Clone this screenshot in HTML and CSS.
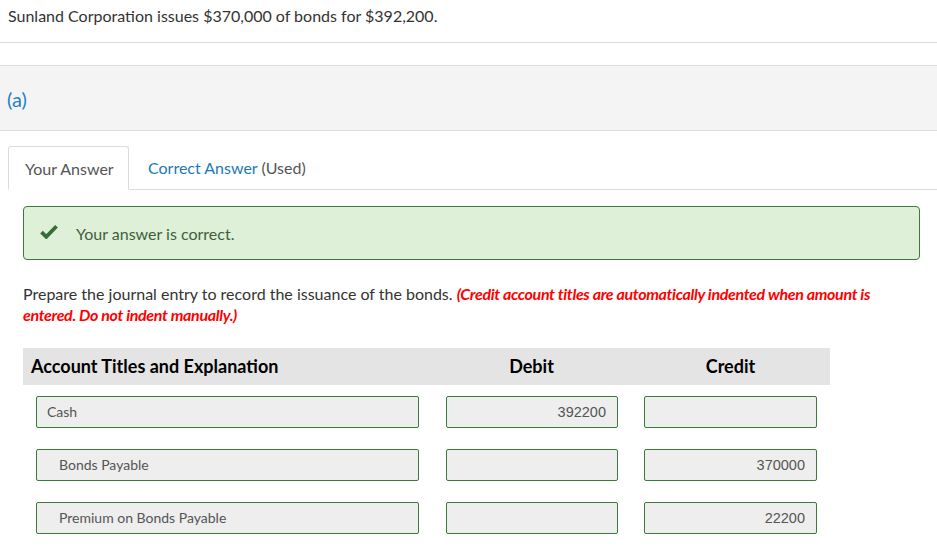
FILE: index.html
```html
<!DOCTYPE html>
<html>
<head>
<meta charset="utf-8">
<link rel="stylesheet" href="styles.css">
</head>
<body>
<div class="question">Sunland Corporation issues $370,000 of bonds for $392,200.</div>
<div class="spacer"></div>
<div class="part-band"><span class="part-label">(a)</span></div>
<div class="tabs">
  <div class="tab active">Your Answer</div>
  <div class="tab"><span class="link">Correct Answer</span> (Used)</div>
  <div class="tab-fill"></div>
</div>
<div class="content">
  <div class="alert">
    <svg class="check" viewBox="0 0 18 15" width="18" height="15"><path d="M1.5 8.2 L6.3 12.8 L16.5 2.2" fill="none" stroke="#356f35" stroke-width="3.8" stroke-linecap="butt" stroke-linejoin="miter"/></svg>
    <span>Your answer is correct.</span>
  </div>
  <p class="instructions">Prepare the journal entry to record the issuance of the bonds. <em class="warn">(Credit account titles are automatically indented when amount is entered. Do not indent manually.)</em></p>
  <div class="journal">
    <div class="head acct">Account Titles and Explanation</div>
    <div class="head num">Debit</div>
    <div class="head num">Credit</div>

    <div class="cell"><div class="field">Cash</div></div>
    <div class="cell"><div class="field amount">392200</div></div>
    <div class="cell"><div class="field amount"></div></div>

    <div class="cell"><div class="field indent">Bonds Payable</div></div>
    <div class="cell"><div class="field amount"></div></div>
    <div class="cell"><div class="field amount">370000</div></div>

    <div class="cell"><div class="field indent">Premium on Bonds Payable</div></div>
    <div class="cell"><div class="field amount"></div></div>
    <div class="cell"><div class="field amount">22200</div></div>
  </div>
</div>
</body>
</html>
```
FILE: styles.css
```css
* { box-sizing: border-box; }
html, body { margin: 0; padding: 0; background: #fff; }
body {
  font-family: Lato, "Open Sans", sans-serif;
  color: #333;
  font-size: 16px;
  width: 937px;
  overflow: hidden;
}
.question {
  padding: 5px 8px 0 8px;
  height: 43px;
  line-height: 22px;
  border-bottom: 1px solid #dcdcdc;
}
.spacer { height: 22px; }
.part-band {
  height: 66px;
  background: #f4f4f4;
  border-top: 1px solid #dcdcdc;
  border-bottom: 1px solid #dcdcdc;
  padding: 21px 8px 0 7px;
}
.part-label {
  font-size: 20px;
  color: #2381c4;
  line-height: 24px;
}
.tabs {
  display: flex;
  margin-top: 15px;
  padding-left: 8px;
  height: 44px;
}
.tab {
  padding: 0 16px;
  line-height: 43px;
  color: #555;
  border-bottom: 1px solid #dcdcdc;
  white-space: nowrap;
}
.tab.active {
  width: 121px;
  border: 1px solid #dcdcdc;
  border-bottom: 1px solid #fff;
  border-radius: 3px 3px 0 0;
  background: #fff;
}
.tab .link { color: #1a7ab5; }
.tab-fill { flex: 1; border-bottom: 1px solid #dcdcdc; }
.tab:not(.active) { padding-left: 19px; }
.content { padding: 16px 17px 0 23px; }
.alert {
  display: flex;
  align-items: center;
  height: 54px;
  background: #dff0d8;
  border: 1px solid #3c7a3c;
  border-radius: 4px;
  padding-left: 16px;
  color: #3d5f3d;
}
.alert .check { margin-right: 18px; margin-top: -3px; }
.instructions {
  margin: 23px 0 0 0;
  width: 880px;
  line-height: 21px;
  color: #333;
}
.warn {
  color: #ff0000;
  font-weight: 700;
  font-style: italic;
  letter-spacing: -0.33px;
}
.journal {
  margin-top: 23px;
  display: grid;
  grid-template-columns: 409px 199px 199px;
  row-gap: 21px;
}
.head {
  background: #e4e4e4;
  height: 37px;
  line-height: 37px;
  font-weight: 700;
  font-size: 18px;
  color: #000;
  margin-bottom: -10px;
}
.head.acct { padding-left: 8px; }
.head.num { text-align: center; }
.cell { padding: 0 13px 0 13px; }
.cell:nth-child(3n+2) { padding-left: 14px; }
.field {
  height: 32px;
  border: 1px solid #3c7a3c;
  border-radius: 2px;
  background: #eeeeee;
  color: #555;
  font-size: 14px;
  line-height: 30px;
  padding: 0 10px;
}
.field.indent { padding-left: 22px; }
.field.amount {
  text-align: right;
  font-family: "Liberation Sans", Arial, sans-serif;
  font-size: 14.5px;
  padding-right: 11px;
}
```
